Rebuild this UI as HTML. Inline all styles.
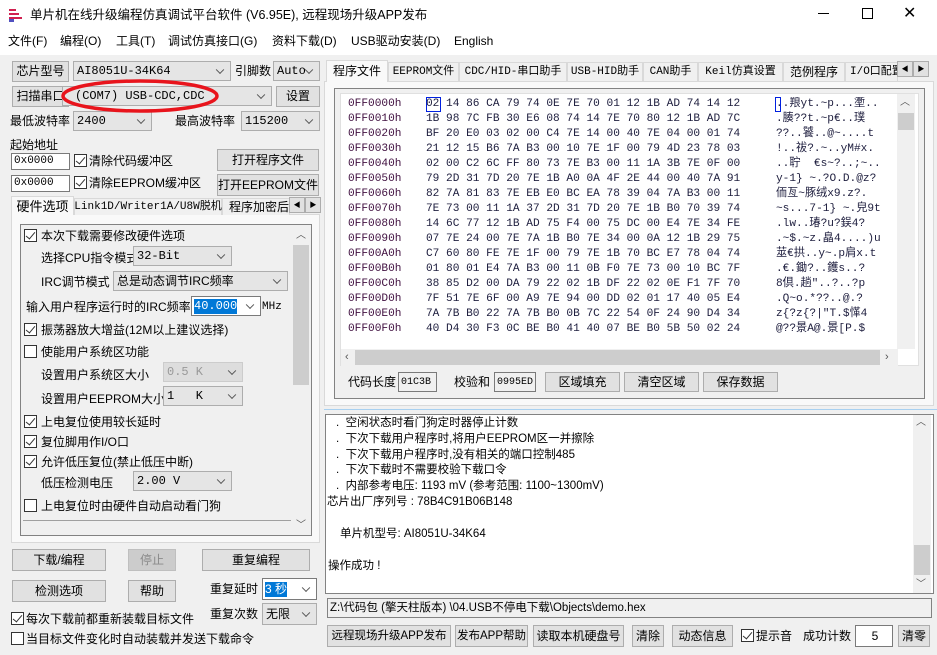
<!DOCTYPE html>
<html><head><meta charset="utf-8">
<style>
*{box-sizing:border-box;margin:0;padding:0}
body{width:937px;height:655px;overflow:hidden;background:#f0f0f0;font-family:"Liberation Sans","Noto Sans CJK SC",sans-serif;font-size:12px;line-height:15px;color:#000;position:relative}
.a{position:absolute;white-space:nowrap}
.btn{position:absolute;background:#e1e1e1;border:1px solid #adadad;display:flex;align-items:center;justify-content:center;font-size:12px;white-space:nowrap}
.cb{position:absolute;background:#e5e5e5;border:1px solid #adadad;font-family:"Liberation Mono","Noto Sans CJK SC",monospace;font-size:12px;padding-left:3px;display:flex;align-items:center;white-space:nowrap}
.cb::after{content:"";position:absolute;right:7px;top:50%;width:5px;height:5px;border-right:1px solid #555;border-bottom:1px solid #555;transform:translateY(-70%) rotate(45deg)}
.w{background:#fff;border-color:#7a7a7a}
.chk{position:absolute;width:13px;height:13px;border:1px solid #333;background:#fff}
.chk.on::after{content:"";position:absolute;left:3px;top:0px;width:4px;height:8px;border-right:1.5px solid #333;border-bottom:1.5px solid #333;transform:rotate(40deg)}
.tx{position:absolute;background:#fff;border:1px solid #7a7a7a;font-family:"Liberation Mono",monospace;font-size:11px;display:flex;align-items:center;padding-left:2px}
.hex{position:absolute;font-family:"Liberation Mono","Noto Sans CJK SC",monospace;font-size:11.15px;white-space:pre;color:#202040;line-height:15px}
.tab{position:absolute;border:1px solid #d9d9d9;border-bottom:none;background:#f0f0f0;font-size:12px;display:flex;align-items:center;justify-content:center;white-space:nowrap;font-family:"Liberation Mono","Noto Sans CJK SC",monospace}
.log{position:absolute;font-size:11.5px;white-space:nowrap;font-family:"Liberation Sans","Noto Sans CJK SC",sans-serif}
</style></head><body>
<div class="a" style="left:0;top:0;width:937px;height:55px;background:#fff"></div>
<svg class="a" style="left:7px;top:6px" width="18" height="16"><g stroke="#d02050" stroke-width="2" fill="none"><path d="M2 4h7M2 8h10M2 12h13"/></g><rect x="2" y="13" width="5" height="3" fill="#5050c0"/></svg>
<div class="a" style="left:30px;top:8px;font-size:12.5px">单片机在线升级编程仿真调试平台软件 (V6.95E), 远程现场升级APP发布</div>
<div class="a" style="left:818px;top:13px;width:11px;height:1px;background:#000"></div>
<div class="a" style="left:862px;top:8px;width:11px;height:11px;border:1px solid #000"></div>
<div class="a" style="left:903px;top:4px;font-size:16px;line-height:20px">✕</div>
<div class="a" style="left:8px;top:34px">文件(F)</div>
<div class="a" style="left:60px;top:34px">编程(O)</div>
<div class="a" style="left:116px;top:34px">工具(T)</div>
<div class="a" style="left:168px;top:34px">调试仿真接口(G)</div>
<div class="a" style="left:272px;top:34px">资料下载(D)</div>
<div class="a" style="left:351px;top:34px">USB驱动安装(D)</div>
<div class="a" style="left:454px;top:34px">English</div>

<div class="btn" style="left:12px;top:61px;width:57px;height:21px">芯片型号</div>
<div class="cb" style="left:73px;top:61px;width:158px;height:20px">AI8051U-34K64</div>
<div class="a" style="left:235px;top:64px">引脚数</div>
<div class="cb" style="left:273px;top:61px;width:47px;height:20px">Auto</div>
<div class="btn" style="left:12px;top:86px;width:57px;height:21px">扫描串口</div>
<div class="cb" style="left:62px;top:86px;width:210px;height:20px;padding-left:12px">(COM7) USB-CDC,CDC</div>
<div class="btn" style="left:276px;top:86px;width:44px;height:21px">设置</div>
<div class="a" style="left:10px;top:114px">最低波特率</div>
<div class="cb" style="left:73px;top:111px;width:79px;height:20px">2400</div>
<div class="a" style="left:175px;top:114px">最高波特率</div>
<div class="cb" style="left:241px;top:111px;width:79px;height:20px">115200</div>
<div class="a" style="left:10px;top:138px">起始地址</div>
<div class="tx" style="left:11px;top:153px;width:59px;height:17px">0x0000</div>
<div class="chk on" style="left:74px;top:154px"></div>
<div class="a" style="left:89px;top:154px">清除代码缓冲区</div>
<div class="btn" style="left:217px;top:149px;width:102px;height:22px">打开程序文件</div>
<div class="tx" style="left:11px;top:175px;width:59px;height:17px">0x0000</div>
<div class="chk on" style="left:74px;top:176px"></div>
<div class="a" style="left:89px;top:176px">清除EEPROM缓冲区</div>
<div class="btn" style="left:217px;top:174px;width:102px;height:22px">打开EEPROM文件</div>

<div class="a" style="left:11px;top:214px;width:309px;height:329px;background:#f9f9f9;border:1px solid #d9d9d9"></div>
<div class="tab" style="left:11px;top:196px;width:63px;height:19px;background:#f9f9f9;font-family:'Liberation Sans','Noto Sans CJK SC',sans-serif;font-size:13px">硬件选项</div>
<div class="tab" style="left:74px;top:198px;width:148px;height:17px;font-size:11px">Link1D/Writer1A/U8W脱机</div>
<div class="tab" style="left:222px;top:198px;width:68px;height:17px;justify-content:flex-start;padding-left:6px;overflow:hidden;font-family:'Liberation Sans','Noto Sans CJK SC',sans-serif;font-size:12px">程序加密后</div>
<div class="btn" style="left:289px;top:197px;width:16px;height:16px;font-size:7px">◀</div>
<div class="btn" style="left:305px;top:197px;width:16px;height:16px;font-size:7px">▶</div>
<div class="a" style="left:20px;top:224px;width:292px;height:312px;border:1px solid #828282;background:#f0f0f0"></div>
<div class="a" style="left:292px;top:225px;width:19px;height:310px;background:#f0f0f0"></div>
<div class="a" style="left:293px;top:245px;width:16px;height:140px;background:#cdcdcd"></div>
<div class="a" style="left:296px;top:228px;font-size:10px;color:#555">︿</div>
<div class="a" style="left:296px;top:518px;font-size:10px;color:#555">﹀</div>
<div class="a" style="left:23px;top:520px;width:268px;height:1px;background:#a0a0a0"></div>

<div class="chk on" style="left:24px;top:229px"></div><div class="a" style="left:41px;top:229px">本次下载需要修改硬件选项</div>
<div class="a" style="left:41px;top:251px">选择CPU指令模式</div><div class="cb" style="left:133px;top:246px;width:99px;height:20px">32-Bit</div>
<div class="a" style="left:41px;top:275px">IRC调节模式</div><div class="cb" style="left:113px;top:271px;width:175px;height:20px;font-family:'Liberation Sans','Noto Sans CJK SC',sans-serif;font-size:12px">总是动态调节IRC频率</div>
<div class="a" style="left:26px;top:300px">输入用户程序运行时的IRC频率</div>
<div class="cb w" style="left:191px;top:296px;width:70px;height:20px;padding-left:2px"><span style="background:#0078d7;color:#fff">40.000</span></div>
<div class="a" style="left:262px;top:300px;font-size:11px;font-family:'Liberation Mono',monospace">MHz</div>
<div class="chk on" style="left:24px;top:323px"></div><div class="a" style="left:41px;top:323px">振荡器放大增益(12M以上建议选择)</div>
<div class="chk" style="left:24px;top:345px"></div><div class="a" style="left:41px;top:345px">使能用户系统区功能</div>
<div class="a" style="left:41px;top:368px">设置用户系统区大小</div><div class="cb" style="left:163px;top:362px;width:80px;height:20px;color:#999;background:#ddd;border-color:#ccc">0.5 K</div>
<div class="a" style="left:41px;top:392px">设置用户EEPROM大小</div><div class="cb" style="left:163px;top:386px;width:80px;height:20px">1&nbsp;&nbsp;&nbsp;K</div>
<div class="chk on" style="left:24px;top:415px"></div><div class="a" style="left:41px;top:415px">上电复位使用较长延时</div>
<div class="chk on" style="left:24px;top:435px"></div><div class="a" style="left:41px;top:435px">复位脚用作I/O口</div>
<div class="chk on" style="left:24px;top:455px"></div><div class="a" style="left:41px;top:455px">允许低压复位(禁止低压中断)</div>
<div class="a" style="left:41px;top:476px">低压检测电压</div><div class="cb" style="left:133px;top:471px;width:99px;height:20px">2.00 V</div>
<div class="chk" style="left:24px;top:499px"></div><div class="a" style="left:41px;top:499px">上电复位时由硬件自动启动看门狗</div>

<div class="btn" style="left:12px;top:549px;width:94px;height:22px">下载/编程</div>
<div class="btn" style="left:128px;top:549px;width:48px;height:22px;background:#ccc;border-color:#bfbfbf;color:#8a8a8a">停止</div>
<div class="btn" style="left:202px;top:549px;width:108px;height:22px">重复编程</div>
<div class="btn" style="left:12px;top:580px;width:94px;height:22px">检测选项</div>
<div class="btn" style="left:128px;top:580px;width:48px;height:22px">帮助</div>
<div class="a" style="left:210px;top:582px">重复延时</div>
<div class="cb w" style="left:262px;top:578px;width:55px;height:22px;padding-left:2px"><span style="background:#0078d7;color:#fff;font-family:'Liberation Sans','Noto Sans CJK SC',sans-serif">3 秒</span></div>
<div class="a" style="left:210px;top:607px">重复次数</div>
<div class="cb" style="left:262px;top:603px;width:55px;height:22px;font-family:'Liberation Sans','Noto Sans CJK SC',sans-serif;font-size:12px">无限</div>
<div class="chk on" style="left:11px;top:612px"></div><div class="a" style="left:26px;top:612px">每次下载前都重新装载目标文件</div>
<div class="chk" style="left:11px;top:632px"></div><div class="a" style="left:26px;top:632px">当目标文件变化时自动装载并发送下载命令</div>

<div class="a" style="left:324px;top:81px;width:610px;height:325px;background:#f9f9f9;border:1px solid #d9d9d9"></div>
<div class="tab" style="left:326px;top:60px;width:62px;height:22px;background:#f9f9f9;font-family:'Liberation Sans','Noto Sans CJK SC',sans-serif;font-size:12px">程序文件</div>
<div class="tab" style="left:388px;top:62px;width:71px;height:19px;font-size:11px">EEPROM文件</div>
<div class="tab" style="left:459px;top:62px;width:108px;height:19px;font-size:11px">CDC/HID-串口助手</div>
<div class="tab" style="left:567px;top:62px;width:76px;height:19px;font-size:11px">USB-HID助手</div>
<div class="tab" style="left:643px;top:62px;width:55px;height:19px;font-size:11px">CAN助手</div>
<div class="tab" style="left:698px;top:62px;width:85px;height:19px;font-size:11px">Keil仿真设置</div>
<div class="tab" style="left:783px;top:62px;width:62px;height:19px;font-family:'Liberation Sans','Noto Sans CJK SC',sans-serif">范例程序</div>
<div class="tab" style="left:845px;top:62px;width:53px;height:19px;overflow:hidden;justify-content:flex-start;padding-left:4px;font-size:11px">I/O口配置</div>
<div class="btn" style="left:897px;top:61px;width:16px;height:16px;font-size:7px">◀</div>
<div class="btn" style="left:913px;top:61px;width:16px;height:16px;font-size:7px">▶</div>
<div class="a" style="left:334px;top:88px;width:591px;height:311px;border:1px solid #828282;background:#f0f0f0"></div>
<div class="a" style="left:340px;top:93px;width:579px;height:273px;background:#fff;border:1px solid #e0e0e0"></div>
<div class="a" style="left:897px;top:94px;width:18px;height:255px;background:#f0f0f0"></div>
<div class="a" style="left:898px;top:113px;width:16px;height:17px;background:#cdcdcd"></div>
<div class="a" style="left:900px;top:95px;font-size:10px;color:#555">︿</div>
<div class="a" style="left:341px;top:349px;width:557px;height:17px;background:#f0f0f0"></div>
<div class="a" style="left:355px;top:350px;width:525px;height:15px;background:#cdcdcd"></div>
<div class="a" style="left:345px;top:350px;font-size:11px;color:#555">‹</div>
<div class="a" style="left:885px;top:350px;font-size:11px;color:#555">›</div>
<div class="a" style="left:426px;top:97px;width:15px;height:15px;border:1px solid #0020e0"></div>
<div class="a" style="left:775px;top:97px;width:6px;height:15px;border:1px solid #0020e0"></div>
<div class="hex" style="left:348px;top:97px;color:#401040">0FF0000h
0FF0010h
0FF0020h
0FF0030h
0FF0040h
0FF0050h
0FF0060h
0FF0070h
0FF0080h
0FF0090h
0FF00A0h
0FF00B0h
0FF00C0h
0FF00D0h
0FF00E0h
0FF00F0h</div>
<div class="hex" style="left:426px;top:97px">02 14 86 CA 79 74 0E 7E 70 01 12 1B AD 74 14 12
1B 98 7C FB 30 E6 08 74 14 7E 70 80 12 1B AD 7C
BF 20 E0 03 02 00 C4 7E 14 00 40 7E 04 00 01 74
21 12 15 B6 7A B3 00 10 7E 1F 00 79 4D 23 78 03
02 00 C2 6C FF 80 73 7E B3 00 11 1A 3B 7E 0F 00
79 2D 31 7D 20 7E 1B A0 0A 4F 2E 44 00 40 7A 91
82 7A 81 83 7E EB E0 BC EA 78 39 04 7A B3 00 11
7E 73 00 11 1A 37 2D 31 7D 20 7E 1B B0 70 39 74
14 6C 77 12 1B AD 75 F4 00 75 DC 00 E4 7E 34 FE
07 7E 24 00 7E 7A 1B B0 7E 34 00 0A 12 1B 29 75
C7 60 80 FE 7E 1F 00 79 7E 1B 70 BC E7 78 04 74
01 80 01 E4 7A B3 00 11 0B F0 7E 73 00 10 BC 7F
38 85 D2 00 DA 79 22 02 1B DF 22 02 0E F1 7F 70
7F 51 7E 6F 00 A9 7E 94 00 DD 02 01 17 40 05 E4
7A 7B B0 22 7A 7B B0 0B 7C 22 54 0F 24 90 D4 34
40 D4 30 F3 0C BE B0 41 40 07 BE B0 5B 50 02 24</div>
<div class="hex" style="left:776px;top:97px;width:120px;overflow:hidden">..羪yt.~p...壍..
.腠??t.~p€..璞
??..饕..@~....t
!..祓?.~..yM#x.
..聍  €s~?..;~..
y-1} ~.?O.D.@z?
侕亙~豚绒x9.z?.
~s...7-1} ~.皃9t
.lw..瑃?u?鋘4?
.~$.~z.皛4....)u
莁€拱..y~.p肩x.t
.€.鋤?..鑊s..?
8倶.趟"..?..?p
.Q~o.*??..@.?
z{?z{?|"T.$愅4
@??景A@.景[P.$</div>

<div class="a" style="left:348px;top:375px">代码长度</div>
<div class="tx" style="left:398px;top:372px;width:39px;height:20px;background:#f0f0f0;font-size:10px">01C3B</div>
<div class="a" style="left:454px;top:375px">校验和</div>
<div class="tx" style="left:494px;top:372px;width:42px;height:20px;background:#f0f0f0;font-size:10px">0995ED</div>
<div class="btn" style="left:545px;top:372px;width:75px;height:20px">区域填充</div>
<div class="btn" style="left:624px;top:372px;width:75px;height:20px">清空区域</div>
<div class="btn" style="left:703px;top:372px;width:75px;height:20px">保存数据</div>

<div class="a" style="left:324px;top:409px;width:613px;height:1px;background:#a8d0f0"></div>
<div class="a" style="left:325px;top:414px;width:609px;height:180px;background:#fff;border:1px solid #828282"></div>
<div class="a" style="left:913px;top:415px;width:18px;height:178px;background:#f0f0f0"></div>
<div class="a" style="left:914px;top:545px;width:16px;height:30px;background:#cdcdcd"></div>
<div class="a" style="left:916px;top:415px;font-size:10px;color:#555">︿</div>
<div class="a" style="left:916px;top:577px;font-size:10px;color:#555">﹀</div>
<div class="log" style="left:336px;top:416px">.&nbsp; 空闲状态时看门狗定时器停止计数</div>
<div class="log" style="left:336px;top:432px">.&nbsp; 下次下载用户程序时,将用户EEPROM区一并擦除</div>
<div class="log" style="left:336px;top:448px">.&nbsp; 下次下载用户程序时,没有相关的端口控制485</div>
<div class="log" style="left:336px;top:463px">.&nbsp; 下次下载时不需要校验下载口令</div>
<div class="log" style="left:336px;top:479px">.&nbsp; 内部参考电压: 1193 mV (参考范围: 1100~1300mV)</div>
<div class="log" style="left:327px;top:495px">芯片出厂序列号 : 78B4C91B06B148</div>
<div class="log" style="left:340px;top:527px">单片机型号: AI8051U-34K64</div>
<div class="log" style="left:328px;top:559px">操作成功 !</div>

<div class="a" style="left:327px;top:598px;width:605px;height:20px;border:1px solid #828282;background:#f0f0f0;font-size:11.5px;padding:2px 2px">Z:\代码包 (擎天柱版本) \04.USB不停电下载\Objects\demo.hex</div>
<div class="btn" style="left:327px;top:625px;width:124px;height:22px;font-size:11.5px">远程现场升级APP发布</div>
<div class="btn" style="left:455px;top:625px;width:73px;height:22px;font-size:11.5px">发布APP帮助</div>
<div class="btn" style="left:533px;top:625px;width:91px;height:22px">读取本机硬盘号</div>
<div class="btn" style="left:632px;top:625px;width:32px;height:22px">清除</div>
<div class="btn" style="left:672px;top:625px;width:61px;height:22px">动态信息</div>
<div class="chk on" style="left:741px;top:629px"></div><div class="a" style="left:756px;top:629px">提示音</div>
<div class="a" style="left:803px;top:629px">成功计数</div>
<div class="tx" style="left:855px;top:625px;width:38px;height:22px;justify-content:center;font-family:'Liberation Sans',sans-serif;font-size:12px">5</div>
<div class="btn" style="left:898px;top:625px;width:32px;height:22px">清零</div>

<svg class="a" style="left:0;top:0" width="937" height="655"><ellipse cx="140" cy="96" rx="77" ry="15" fill="none" stroke="#e8141c" stroke-width="3.5"/></svg>
</body></html>
